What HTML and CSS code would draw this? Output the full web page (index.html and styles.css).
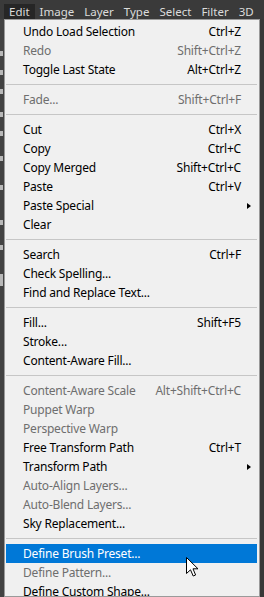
FILE: index.html
```html
<!DOCTYPE html>
<html lang="en">
<head>
    <meta charset="UTF-8">
    <meta name="viewport" content="width=device-width, initial-scale=1.0">
    <title>Edit menu</title>
    <link rel="stylesheet" href="styles.css">
</head>
<body>
    <div class="menubar">
        <span class="menubar-item active">Edit</span>
        <span class="menubar-item">Image</span>
        <span class="menubar-item">Layer</span>
        <span class="menubar-item">Type</span>
        <span class="menubar-item">Select</span>
        <span class="menubar-item">Filter</span>
        <span class="menubar-item">3D</span>
    </div>

    <div class="workspace">
        <div class="toolbar-strip">
            <i class="tool-mark" style="margin-top: 32px"></i>
            <i class="tool-mark" style="margin-top: 14px"></i>
            <i class="tool-mark" style="margin-top: 14px"></i>
            <i class="tool-mark" style="margin-top: 18px"></i>
            <i class="tool-mark" style="margin-top: 14px"></i>
            <i class="tool-mark" style="margin-top: 20px"></i>
            <i class="tool-mark" style="margin-top: 24px"></i>
            <i class="tool-mark" style="margin-top: 30px"></i>
            <i class="tool-mark" style="margin-top: 20px"></i>
            <i class="tool-mark tall" style="margin-top: 24px"></i>
        </div>

        <div class="menu">
            <div class="item"><span>Undo Load Selection</span><span class="key">Ctrl+Z</span></div>
            <div class="item off"><span>Redo</span><span class="key">Shift+Ctrl+Z</span></div>
            <div class="item"><span>Toggle Last State</span><span class="key">Alt+Ctrl+Z</span></div>
            <div class="sep"></div>
            <div class="item off"><span>Fade...</span><span class="key">Shift+Ctrl+F</span></div>
            <div class="sep"></div>
            <div class="item"><span>Cut</span><span class="key">Ctrl+X</span></div>
            <div class="item"><span>Copy</span><span class="key">Ctrl+C</span></div>
            <div class="item"><span>Copy Merged</span><span class="key">Shift+Ctrl+C</span></div>
            <div class="item"><span>Paste</span><span class="key">Ctrl+V</span></div>
            <div class="item sub"><span>Paste Special</span><span class="key"></span></div>
            <div class="item"><span>Clear</span><span class="key"></span></div>
            <div class="sep"></div>
            <div class="item"><span>Search</span><span class="key">Ctrl+F</span></div>
            <div class="item"><span>Check Spelling...</span><span class="key"></span></div>
            <div class="item"><span>Find and Replace Text...</span><span class="key"></span></div>
            <div class="sep"></div>
            <div class="item"><span>Fill...</span><span class="key">Shift+F5</span></div>
            <div class="item"><span>Stroke...</span><span class="key"></span></div>
            <div class="item"><span>Content-Aware Fill...</span><span class="key"></span></div>
            <div class="sep"></div>
            <div class="item off"><span>Content-Aware Scale</span><span class="key">Alt+Shift+Ctrl+C</span></div>
            <div class="item off"><span>Puppet Warp</span><span class="key"></span></div>
            <div class="item off"><span>Perspective Warp</span><span class="key"></span></div>
            <div class="item"><span>Free Transform Path</span><span class="key">Ctrl+T</span></div>
            <div class="item sub"><span>Transform Path</span><span class="key"></span></div>
            <div class="item off"><span>Auto-Align Layers...</span><span class="key"></span></div>
            <div class="item off"><span>Auto-Blend Layers...</span><span class="key"></span></div>
            <div class="item"><span>Sky Replacement...</span><span class="key"></span></div>
            <div class="sep"></div>
            <div class="item hover"><span>Define Brush Preset...</span><span class="key"></span></div>
            <div class="item off"><span>Define Pattern...</span><span class="key"></span></div>
            <div class="item"><span>Define Custom Shape...</span><span class="key"></span></div>

            <!-- mouse pointer over the highlighted item -->
            <svg class="cursor" width="13" height="20" viewBox="0 0 13 20">
                <path d="M0.5 0.5 L0.5 16.5 L4.5 12.8 L7.2 19 L9.6 18 L7 11.8 L12 11.8 Z" fill="#fff" stroke="#000" stroke-width="1" stroke-linejoin="miter"/>
            </svg>
        </div>

        <div class="right-strip"></div>
    </div>
</body>
</html>
```

FILE: styles.css
```css
body {
    margin: 0;
    background: #3c3c3c;
    font-family: 'Noto Sans', 'Segoe UI', sans-serif;
    overflow: hidden;
}
.menubar {
    height: 19px;
    display: flex;
    align-items: flex-end;
    padding-left: 4px;
    background: #3a3a3a;
    box-sizing: border-box;
    overflow: hidden;
}
.menubar-item {
    height: 15px;
    line-height: 15px;
    padding: 0 5px;
    font-size: 11.5px;
    color: #dcdcdc;
    white-space: nowrap;
}
.menubar-item.active {
    background: #262626;
}
.workspace {
    display: flex;
    height: 578px;
}
.toolbar-strip {
    width: 4px;
    flex: none;
    background: #424242;
    display: flex;
    flex-direction: column;
}
.tool-mark {
    display: block;
    width: 3px;
    height: 5px;
    background: #b8b8b8;
}
.tool-mark.tall {
    height: 12px;
}
.menu {
    position: relative;
    flex: none;
    width: 251px;
    border: 1px solid #9a9a9a;
    padding: 2px 2px 0 1px;
    background: #f0f0f0;
    font-size: 12px;
    letter-spacing: -0.2px;
    overflow: hidden;
}
.item {
    display: grid;
    grid-template-columns: 1fr auto 16px;
    height: 19px;
    line-height: 19px;
    padding-left: 17px;
    color: #000;
    white-space: nowrap;
}
.item.off {
    color: #6e6e6e;
}
.item.hover {
    background: #0078d7;
    color: #fff;
}
.item.sub::after {
    content: '';
    align-self: center;
    justify-self: start;
    margin-left: 6px;
    width: 0;
    height: 0;
    border-top: 3.5px solid transparent;
    border-bottom: 3.5px solid transparent;
    border-left: 4px solid #000;
}
.key {
    text-align: right;
}
.sep {
    height: 1px;
    margin: 5px 0;
    background: #c6c6c6;
}
.cursor {
    position: absolute;
    left: 181px;
    top: 537px;
}
.right-strip {
    flex: 1;
    background: #383838;
}
```
